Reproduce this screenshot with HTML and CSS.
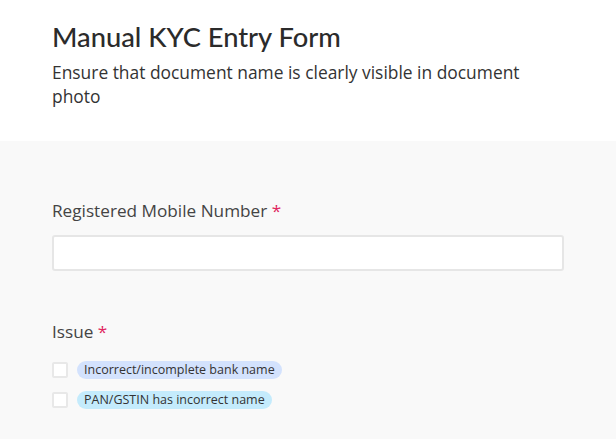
FILE: index.html
```html
<!DOCTYPE html>
<html>
<head>
<meta charset="utf-8">
<link rel="stylesheet" href="styles.css">
</head>
<body>
<header class="head">
  <h1 class="title">Manual KYC Entry Form</h1>
  <p class="desc">Ensure that document name is clearly visible in document photo</p>
</header>
<main class="form">
  <div class="field field-mobile">
    <label class="label">Registered Mobile Number <span class="req">*</span></label>
    <input class="input" type="text">
  </div>
  <div class="field">
    <div class="label">Issue <span class="req">*</span></div>
    <div class="options">
      <label class="opt"><span class="box"></span><span class="chip chip-blue">Incorrect/incomplete bank name</span></label>
      <label class="opt"><span class="box"></span><span class="chip chip-cyan">PAN/GSTIN has incorrect name</span></label>
    </div>
  </div>
</main>
</body>
</html>
```
FILE: styles.css
```css
* { box-sizing: border-box; }
html, body { margin: 0; padding: 0; }
body {
  font-family: "Open Sans", "Noto Sans", sans-serif;
  color: #333;
  background: #f9f9f9;
  height: 439px;
  overflow: hidden;
}
.head {
  background: #fff;
  padding: 20px 52px 0;
  height: 141px;
}
.title {
  margin: 0;
  font-family: Lato, sans-serif;
  font-weight: 500;
  font-size: 27.3px;
  line-height: 34px;
  color: #2b2b2b;
}
.desc {
  margin: 6px 0 0;
  font-size: 17.4px;
  line-height: 24px;
  max-width: 480px;
  color: #333;
}
.form {
  padding: 58px 52px 0;
}
.field-mobile { margin-bottom: 49px; }
.label {
  display: block;
  font-size: 17.2px;
  line-height: 24px;
  color: #444;
}
.req { color: #e0245e; }
.input {
  display: block;
  margin-top: 12px;
  width: 512px;
  height: 36px;
  border: 2px solid #e6e6e6;
  border-radius: 3px;
  background: #fff;
  outline: none;
}
.options {
  margin-top: 17px;
  display: flex;
  flex-direction: column;
  gap: 12px;
}
.opt {
  display: flex;
  align-items: center;
  gap: 9px;
  height: 18px;
}
.box {
  width: 16px;
  height: 16px;
  border: 2px solid #e8e8e8;
  border-radius: 2px;
  background: #fff;
}
.chip {
  font-size: 12.5px;
  line-height: 18px;
  padding: 0 7px;
  border-radius: 9px;
  color: #333;
}
.chip-blue { background: #d3e2fd; }
.chip-cyan { background: #c4ebfc; }
```
